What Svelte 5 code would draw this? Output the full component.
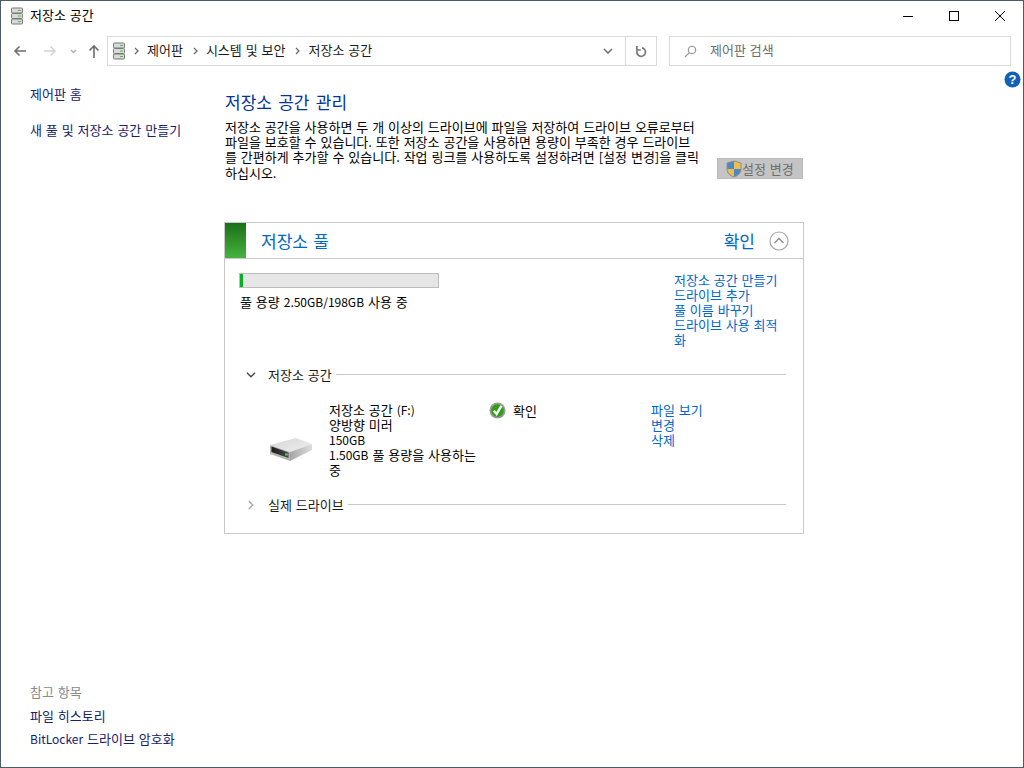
<script>
  const crumbs = ["제어판", "시스템 및 보안", "저장소 공간"];
  const poolLinks = ["저장소 공간 만들기", "드라이브 추가", "풀 이름 바꾸기", "드라이브 사용 최적화"];
  const spaceLinks = ["파일 보기", "변경", "삭제"];
</script>

{#snippet stack()}
  <svg class="stack" width="14" height="18" viewBox="0 0 14 18">
    <rect x="1.5" y="1" width="11" height="5" rx="1" fill="#d6dad8" stroke="#77797a" />
    <rect x="1.5" y="6.5" width="11" height="5" rx="1" fill="#d6dad8" stroke="#77797a" />
    <rect x="1.5" y="12" width="11" height="5" rx="1" fill="#d6dad8" stroke="#77797a" />
    <rect x="8" y="3" width="3" height="1" fill="#62b53c" />
    <rect x="8" y="8.5" width="3" height="1" fill="#62b53c" />
    <rect x="8" y="14" width="3" height="1" fill="#62b53c" />
  </svg>
{/snippet}

{#snippet crumbArrow()}
  <svg width="5" height="8" viewBox="0 0 5 8"><path d="M1 1l3 3-3 3" fill="none" stroke="#6a6a6a" stroke-width="1.3" /></svg>
{/snippet}

<div class="window">
  <header class="titlebar">
    <div class="title">
      {@render stack()}
      <span>저장소 공간</span>
    </div>
    <div class="controls">
      <button aria-label="최소화"><svg width="10" height="10" viewBox="0 0 10 10"><path d="M0 5.5h10" stroke="#000" /></svg></button>
      <button aria-label="최대화"><svg width="10" height="10" viewBox="0 0 10 10"><rect x=".5" y=".5" width="9" height="9" fill="none" stroke="#000" /></svg></button>
      <button aria-label="닫기"><svg width="10" height="10" viewBox="0 0 10 10"><path d="M0 0l10 10M10 0L0 10" stroke="#000" /></svg></button>
    </div>
  </header>

  <nav class="navbar">
    <div class="navbtns">
      <svg width="14" height="12" viewBox="0 0 14 12"><path d="M13 6H2M6.500 1.500L2 6l4.500 4.500" fill="none" stroke="#6e6e6e" stroke-width="1.600" /></svg>
      <svg class="fwd" width="14" height="12" viewBox="0 0 14 12"><path d="M1 6h11M7.500 1.500L12 6l-4.500 4.500" fill="none" stroke="#d4d4d4" stroke-width="1.600" /></svg>
      <svg class="recent" width="7" height="5" viewBox="0 0 7 5"><path d="M1 1l2.500 2.500L6 1" fill="none" stroke="#b0b0b0" stroke-width="1.300" /></svg>
      <svg class="up" width="12" height="14" viewBox="0 0 12 14"><path d="M6 14V2M1.500 6.500L6 2l4.500 4.500" fill="none" stroke="#6e6e6e" stroke-width="1.600" /></svg>
    </div>
    <div class="address">
      {@render stack()}
      {#each crumbs as crumb}
        {@render crumbArrow()}
        <span class="crumb">{crumb}</span>
      {/each}
      <span class="grow"></span>
      <svg class="drop" width="10" height="6" viewBox="0 0 10 6"><path d="M1 1l4 4 4-4" fill="none" stroke="#6e6e6e" stroke-width="1.500" /></svg>
      <div class="refresh">
        <svg width="12" height="13" viewBox="0 0 12 13"><path d="M7 2.800A4.300 4.300 0 1 1 2 6M1.800 1v4h4" fill="none" stroke="#757575" stroke-width="1.700" /></svg>
      </div>
    </div>
    <div class="search">
      <svg width="13" height="13" viewBox="0 0 13 13"><circle cx="8" cy="5" r="3.800" fill="none" stroke="#8a8a8a" /><path d="M5.200 7.800L1 12" stroke="#b98a8a" stroke-width="1.100" /></svg>
      <span>제어판 검색</span>
    </div>
  </nav>

  <div class="body">
    <aside class="sidebar">
      <div class="side-top">
        <div>제어판 홈</div>
        <div>새 풀 및 저장소 공간 만들기</div>
      </div>
      <div class="side-bottom">
        <div class="see-also">참고 항목</div>
        <div>파일 히스토리</div>
        <div><span class="lat">BitLocker</span> 드라이브 암호화</div>
      </div>
    </aside>

    <main class="main">
      <h1>저장소 공간 관리</h1>
      <div class="intro">
        <p>저장소 공간을 사용하면 두 개 이상의 드라이브에 파일을 저장하여 드라이브 오류로부터 파일을 보호할 수 있습니다. 또한 저장소 공간을 사용하면 용량이 부족한 경우 드라이브를 간편하게 추가할 수 있습니다. 작업 링크를 사용하도록 설정하려면 [설정 변경]을 클릭하십시오.</p>
        <div class="settings">
          <svg width="16" height="18" viewBox="0 0 16 18">
            <path d="M8 1l7 2v6c0 4-3 6.500-7 8z" fill="#e9bf4f" />
            <path d="M8 1L1 3v6c0 4 3 6.500 7 8z" fill="#4f86c6" />
            <path d="M1 9h7v8c-4-1.500-7-4-7-8z" fill="#e9bf4f" />
            <path d="M8 9h7c0 4-3 6.500-7 8z" fill="#4f86c6" />
            <path d="M8 1l7 2v6c0 4-3 6.500-7 8-4-1.500-7-4-7-8V3z" fill="none" stroke="#8d8d8d" />
          </svg>
          <span>설정 변경</span>
        </div>
      </div>

      <section class="card">
        <div class="card-head">
          <div class="green"></div>
          <span class="pool-name">저장소 풀</span>
          <span class="grow"></span>
          <span class="pool-state">확인</span>
          <svg width="20" height="20" viewBox="0 0 20 20"><circle cx="10" cy="10" r="9" fill="none" stroke="#a5a5a5" stroke-width="1.200" /><path d="M5.500 12L10 7.500l4.500 4.500" fill="none" stroke="#8a8a8a" stroke-width="1.300" /></svg>
        </div>

        <div class="pool-body">
          <div class="usage">
            <div class="bar"><div class="fill" style="width: {(2.5 / 198) * 100}%"></div></div>
            <div class="usage-text">풀 용량 <span class="lat">2.50GB/198GB</span> 사용 중</div>
          </div>
          <div class="links pool-links">
            {#each poolLinks as link}
              <div>{link}</div>
            {/each}
          </div>
        </div>

        <div class="group-head">
          <svg width="10" height="6" viewBox="0 0 10 6"><path d="M1 .8l4 4 4-4" fill="none" stroke="#444" stroke-width="1.400" /></svg>
          <span>저장소 공간</span>
          <div class="rule"></div>
        </div>

        <div class="space">
          <svg class="disk" width="44" height="26" viewBox="0 0 44 26">
            <defs>
              <linearGradient id="top" x1="0" y1="0" x2="1" y2="1"><stop offset="0" stop-color="#d4d4d4" /><stop offset="1" stop-color="#f0f0f0" /></linearGradient>
              <linearGradient id="side" x1="0" y1="0" x2="1" y2="0"><stop offset="0" stop-color="#a6a6a6" /><stop offset="1" stop-color="#dcdcdc" /></linearGradient>
              <linearGradient id="slot" x1="0" y1="0" x2="1" y2="0"><stop offset="0" stop-color="#1c1c1c" /><stop offset="1" stop-color="#4a4a4a" /></linearGradient>
            </defs>
            <path d="M1 9L27 2l16 6-22 8z" fill="url(#top)" />
            <path d="M21 16L43 8v6L21 25z" fill="url(#side)" />
            <path d="M1 9l20 7v9L1 18z" fill="#b5b5b5" />
            <path d="M2.500 10.500l17 6v5.500l-17-6z" fill="url(#slot)" />
            <rect x="16" y="17.500" width="3" height="2" fill="#4ccd4c" />
          </svg>
          <div class="space-info">
            <div>저장소 공간 <span class="lat">(F:)</span></div>
            <div>양방향 미러</div>
            <div class="lat">150GB</div>
            <div><span class="lat">1.50GB</span> 풀 용량을 사용하는 중</div>
          </div>
          <div class="space-state">
            <svg width="17" height="17" viewBox="0 0 17 17">
              <circle cx="8.500" cy="8.500" r="8" fill="#9a9a9a" />
              <circle cx="8.500" cy="8.500" r="6.300" fill="#2f9e14" />
              <path d="M4.800 8.800l2.800 3.200 4.800-8.200" fill="none" stroke="#fff" stroke-width="2.400" />
            </svg>
            <span>확인</span>
          </div>
          <div class="links space-links">
            {#each spaceLinks as link}
              <div>{link}</div>
            {/each}
          </div>
        </div>

        <div class="group-head last">
          <svg width="6" height="10" viewBox="0 0 6 10"><path d="M.8 1l4 4-4 4" fill="none" stroke="#a8a8a8" stroke-width="1.400" /></svg>
          <span>실제 드라이브</span>
          <div class="rule"></div>
        </div>
      </section>
    </main>

    <svg class="help" width="17" height="17" viewBox="0 0 17 17">
      <circle cx="8.500" cy="8.500" r="8" fill="#0f62b5" />
      <text x="8.500" y="13" text-anchor="middle">?</text>
    </svg>
  </div>
</div>

<style>
  :global(body) {
    margin: 0;
    background: #fff;
  }

  .window {
    box-sizing: border-box;
    width: 1024px;
    height: 768px;
    border: 1px solid #4d5c62;
    display: flex;
    flex-direction: column;
    font-family: "Noto Sans CJK KR", "Open Sans", sans-serif;
    font-size: 13px;
    word-spacing: 1px;
    line-height: 15px;
    color: #000;
    background: #fff;
  }

  .lat {
    font-size: 12px;
  }

  .titlebar {
    height: 30px;
    display: flex;
    align-items: center;
    justify-content: space-between;
    padding-left: 9px;
  }

  .title {
    display: flex;
    align-items: center;
    gap: 6px;
  }

  .title span {
    padding-bottom: 3px;
  }

  .controls {
    display: flex;
  }

  .controls button {
    width: 46px;
    height: 29px;
    border: 0;
    padding: 0;
    background: none;
    display: flex;
    align-items: center;
    justify-content: center;
  }

  .navbar {
    height: 30px;
    margin-top: 5px;
    display: flex;
    padding: 0 12px 0 12px;
  }

  .navbtns {
    width: 94px;
    display: flex;
    align-items: center;
  }

  .fwd {
    margin-left: 16px;
  }

  .recent {
    margin-left: 13px;
  }

  .up {
    margin-left: 11px;
  }

  .address {
    box-sizing: border-box;
    width: 550px;
    display: flex;
    align-items: center;
    border: 1px solid #d9d9d9;
    padding-left: 4px;
    gap: 8px;
  }

  .crumb {
    color: #1a1a1a;
    margin-right: 2px;
    padding-bottom: 4px;
  }

  .grow {
    flex: 1;
  }

  .drop {
    margin-right: 5px;
  }

  .refresh {
    width: 30px;
    height: 100%;
    border-left: 1px solid #d9d9d9;
    display: flex;
    align-items: center;
    justify-content: center;
    margin-left: -1px;
  }

  .search {
    box-sizing: border-box;
    width: 342px;
    margin-left: 12px;
    border: 1px solid #d9d9d9;
    display: flex;
    align-items: center;
    gap: 13px;
    padding-left: 14px;
    color: #6d6d6d;
  }

  .search span {
    padding-bottom: 4px;
  }

  .body {
    flex: 1;
    display: flex;
    position: relative;
  }

  .sidebar {
    width: 223px;
    box-sizing: border-box;
    padding: 20px 0 21px 29px;
    display: flex;
    flex-direction: column;
    justify-content: space-between;
    color: #16216a;
  }

  .side-top {
    display: flex;
    flex-direction: column;
    gap: 21px;
  }

  .side-bottom {
    display: flex;
    flex-direction: column;
    gap: 8px;
  }

  .see-also {
    color: #8a8a8a;
    margin-bottom: 1px;
  }

  .main {
    width: 580px;
  }

  h1 {
    margin: 25px 0 0;
    padding-left: 1px;
    font-size: 17px;
    word-spacing: 2.5px;
    line-height: 22px;
    font-weight: 400;
    color: #003399;
  }

  .intro {
    margin-top: 6px;
    display: flex;
    align-items: flex-end;
  }

  .intro p {
    margin: 0;
    padding-left: 1px;
    width: 476px;
    height: 61px;
    line-height: 15.2px;
    word-break: break-all;
  }

  .settings {
    box-sizing: border-box;
    width: 86px;
    height: 21px;
    margin: 0 0 1px 16px;
    background: #c4c4c4;
    border: 1px solid #bcbcbc;
    color: #6d6d6d;
    display: flex;
    align-items: center;
    padding-left: 8px;
    white-space: nowrap;
  }

  .card {
    box-sizing: border-box;
    height: 312px;
    margin-top: 42px;
    border: 1px solid #c8c8c8;
    display: flex;
    flex-direction: column;
  }

  .card-head {
    height: 35px;
    display: flex;
    align-items: center;
    border-bottom: 1px solid #c8c8c8;
    padding-right: 14px;
  }

  .green {
    width: 21px;
    height: 100%;
    background: linear-gradient(#1a7018, #47b23e);
  }

  .pool-name {
    margin-left: 15px;
    font-size: 17px;
    word-spacing: 1.6px;
    color: #0066cc;
  }

  .pool-state {
    font-size: 17px;
    color: #0066cc;
    margin-right: 14px;
  }

  .pool-body {
    display: flex;
    justify-content: space-between;
    padding: 14px 21px 0 14px;
  }

  .bar {
    box-sizing: border-box;
    width: 200px;
    height: 15px;
    background: #e6e6e6;
    border: 1px solid #bcbcbc;
    margin-bottom: 6px;
  }

  .fill {
    height: 100%;
    background: #06b025;
  }

  .usage-text {
    padding-left: 1px;
  }

  .links {
    color: #0066cc;
  }

  .pool-links {
    width: 108px;
    margin-top: -1px;
    word-break: break-all;
  }

  .group-head {
    display: flex;
    align-items: center;
    margin: 20px 17px 0 21px;
  }

  .group-head svg {
    width: 10px;
    margin-right: 12px;
  }

  .group-head span {
    margin-right: 4px;
    color: #1a1a1a;
  }

  .rule {
    flex: 1;
    height: 1px;
    background: #c8c8c8;
  }

  .space {
    display: flex;
    align-items: flex-start;
    margin-top: 20px;
    padding-left: 44px;
    height: 75px;
  }

  .disk {
    margin-top: 34px;
    flex: none;
  }

  .space-info {
    width: 150px;
    margin-left: 16px;
  }

  .space-state {
    display: flex;
    align-items: center;
    gap: 7px;
    margin-left: 10px;
    width: 162px;
  }

  .help {
    position: absolute;
    right: 2px;
    top: 5px;
  }

  .help text {
    font-family: "Liberation Sans", sans-serif;
    font-size: 13px;
    font-weight: 700;
    fill: #fff;
  }
</style>
